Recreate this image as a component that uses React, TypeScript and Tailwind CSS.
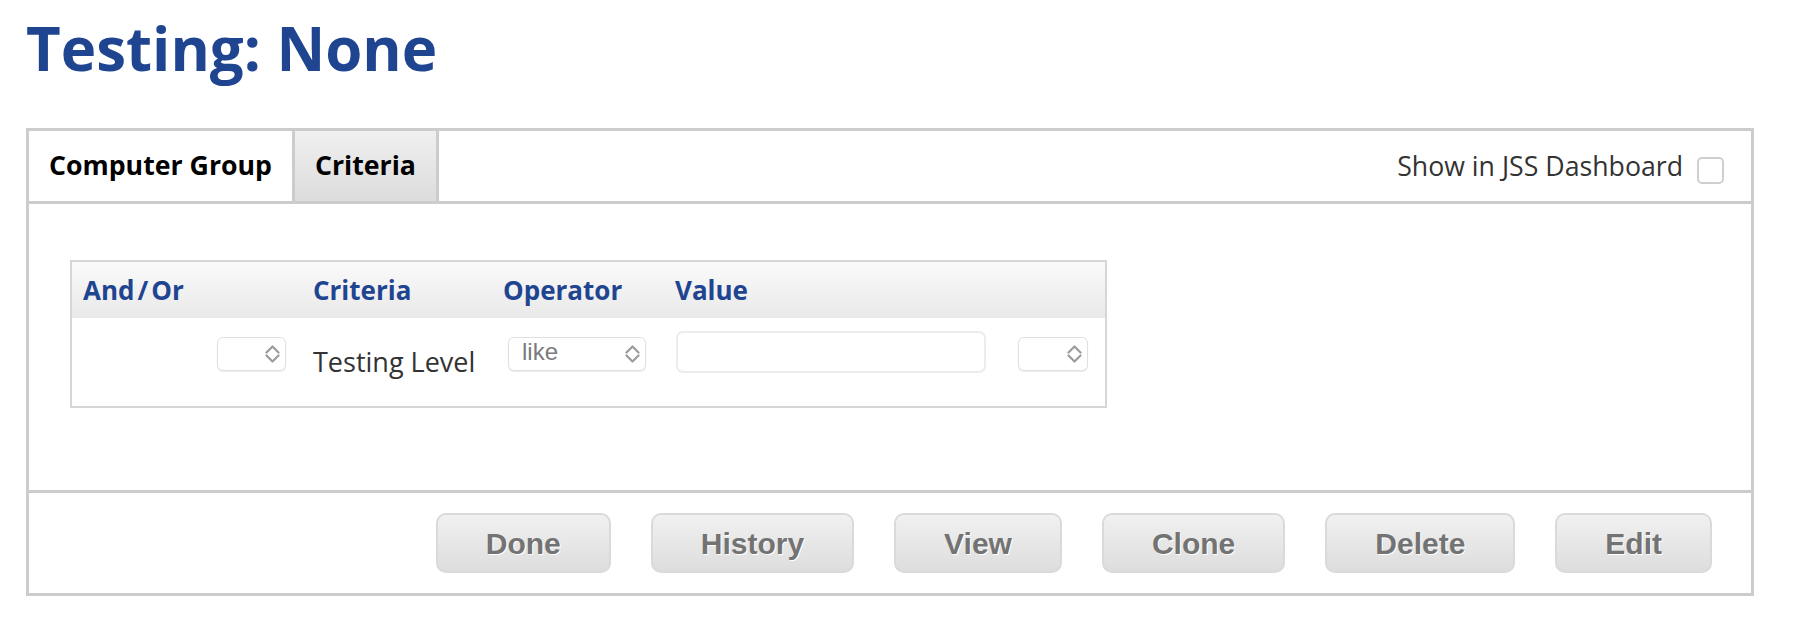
import React from "react";

const Chevrons = () => (
  <svg width="15" height="20" viewBox="0 0 15 20" fill="none">
    <path d="M1.5 8.5 L7.5 2.5 L13.5 8.5" stroke="#9b9b9b" strokeWidth="2.2" strokeLinecap="round" strokeLinejoin="round" />
    <path d="M1.5 11.5 L7.5 17.5 L13.5 11.5" stroke="#9b9b9b" strokeWidth="2.2" strokeLinecap="round" strokeLinejoin="round" />
  </svg>
);

const SelectBox = ({ width, label }: { width: string; label?: string }) => (
  <div
    className={`relative flex h-[34px] items-center rounded-[6px] border border-[#e0e0e0] bg-white shadow-[0_1px_1px_rgba(0,0,0,0.08)] ${width}`}
  >
    {label && (
      <span className="pl-[13px] pb-[5px] font-['Liberation_Sans',sans-serif] text-[24px] leading-none text-[#7b7b7b]">
        {label}
      </span>
    )}
    <span className="absolute right-[5px] top-[6px]">
      <Chevrons />
    </span>
  </div>
);

const buttons = ["Done", "History", "View", "Clone", "Delete", "Edit"];

const App = () => {
  return (
    <div className="min-h-screen bg-white pl-[26px] pr-[44px] pt-[18px] font-['Open_Sans',sans-serif]">
      <h1 className="text-[60px] font-bold leading-[61px] text-[#1f4591]">Testing: None</h1>

      <div className="mt-[49px] border-[3px] border-[#cccccc]">
        {/* tabs */}
        <div className="flex h-[73px] border-b-[3px] border-[#cccccc]">
          <div className="h-full border-r-[3px] border-[#cccccc] px-[20px] text-[26.7px] font-bold leading-[68px] text-black">
            Computer Group
          </div>
          <div className="h-full border-r-[3px] border-[#cccccc] bg-linear-to-b from-[#f0f0f0] to-[#dcdcdc] px-[20px] text-[26.7px] font-bold leading-[68px] text-black">
            Criteria
          </div>
          <div className="ml-auto flex items-center pr-[27px]">
            <span className="text-[26.7px] leading-[70px] text-[#333333]">Show in JSS Dashboard</span>
            <span className="ml-[14px] mt-[9px] h-[27px] w-[27px] rounded-[5px] border-2 border-[#cfcfcf] bg-white" />
          </div>
        </div>

        {/* criteria table */}
        <div className="pb-[82px] pl-[41px] pt-[56px]">
          <div className="w-[1037px] border-2 border-[#d6d6d6]">
            <div className="grid h-[56px] grid-cols-[228px_190px_172px_338px_1fr] bg-linear-to-b from-[#fafafa] to-[#e9e9e9] text-[26px] font-bold leading-[56px] text-[#1f4591]">
              <div className="pl-[11px]">
                And<span className="px-[3px]">/</span>Or
              </div>
              <div className="pl-[13px]">Criteria</div>
              <div className="pl-[13px]">Operator</div>
              <div className="pl-[13px]">Value</div>
              <div />
            </div>
            <div className="grid h-[88px] grid-cols-[228px_190px_172px_338px_1fr]">
              <div className="flex justify-end pr-[14px] pt-[19px]">
                <SelectBox width="w-[69px]" />
              </div>
              <div className="pl-[13px] pt-[25px] text-[27px] leading-[38px] text-[#333333]">Testing Level</div>
              <div className="pl-[18px] pt-[19px]">
                <SelectBox width="w-[138px]" label="like" />
              </div>
              <div className="pl-[14px] pt-[13px]">
                <div className="h-[42px] w-[310px] rounded-[7px] border-2 border-[#ececec] bg-white" />
              </div>
              <div className="pl-[18px] pt-[19px]">
                <SelectBox width="w-[70px]" />
              </div>
            </div>
          </div>
        </div>

        {/* footer buttons */}
        <div className="flex justify-end gap-[40px] border-t-[3px] border-[#cccccc] py-[20px] pr-[39px]">
          {buttons.map((b) => (
            <button
              key={b}
              className="h-[60px] rounded-[10px] border-2 border-[#dadada] bg-linear-to-b from-[#f1f1f1] to-[#dddddd] px-[48px] font-['Liberation_Sans',sans-serif] text-[30px] font-bold text-[#737373] [text-shadow:1px_1px_0_#ffffff]"
            >
              {b}
            </button>
          ))}
        </div>
      </div>
    </div>
  );
};

export default App;
